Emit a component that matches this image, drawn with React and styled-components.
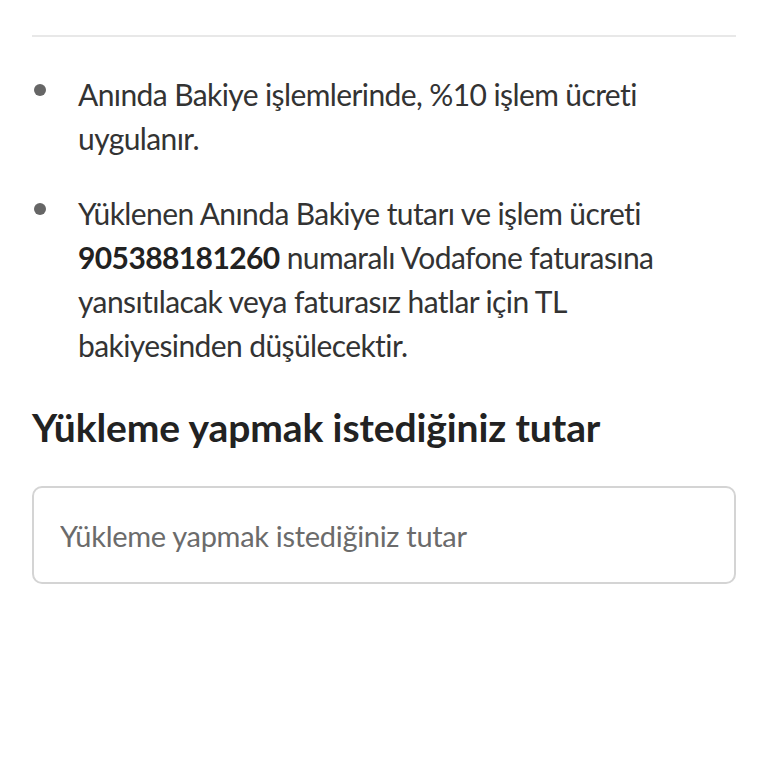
import React from 'react'
import styled, { createGlobalStyle } from 'styled-components'

const Global = createGlobalStyle`
  body {
    margin: 0;
    background: #fff;
    font-family: Lato, "Noto Sans", sans-serif;
    color: #333;
  }
`

const Page = styled.div`
  width: 768px;
  min-height: 768px;
  padding: 35px 32px 0 32px;
  box-sizing: border-box;
  display: flex;
  flex-direction: column;
`

const Divider = styled.hr`
  margin: 0;
  border: none;
  border-top: 2px solid #e8e8e8;
`

const List = styled.ul`
  list-style: none;
  margin: 35px 0 0 0;
  padding: 0;
  display: flex;
  flex-direction: column;
  gap: 31px;
`

const Item = styled.li`
  display: flex;
  align-items: flex-start;
  font-size: 30px;
  line-height: 44px;
  letter-spacing: -0.6px;
  color: #333;
`

const Dot = styled.span`
  flex: none;
  width: 12px;
  height: 12px;
  border-radius: 50%;
  background: #666;
  margin: 12px 32px 0 2px;
`

const Strong = styled.b`
  font-weight: 700;
  color: #222;
`

const Heading = styled.h2`
  margin: 38px 0 0 0;
  font-size: 39px;
  line-height: 44px;
  font-weight: 700;
  letter-spacing: -0.1px;
  color: #222;
`

const Field = styled.input`
  margin-top: 37px;
  height: 98px;
  box-sizing: border-box;
  border: 2px solid #d4d4d4;
  border-radius: 10px;
  padding: 0 26px;
  font-family: Lato, "Noto Sans", sans-serif;
  font-size: 29px;
  letter-spacing: -0.3px;
  color: #333;
  outline: none;
  &::placeholder {
    color: #6b6b6b;
  }
`

export default function App() {
  return (
    <>
      <Global />
      <Page>
        <Divider />
        <List>
          <Item>
            <Dot />
            <span>Anında Bakiye işlemlerinde, %10 işlem ücreti uygulanır.</span>
          </Item>
          <Item>
            <Dot />
            <span>
              Yüklenen Anında Bakiye tutarı ve işlem ücreti <Strong>905388181260</Strong> numaralı Vodafone faturasına yansıtılacak veya faturasız hatlar için TL bakiyesinden düşülecektir.
            </span>
          </Item>
        </List>
        <Heading>Yükleme yapmak istediğiniz tutar</Heading>
        <Field placeholder="Yükleme yapmak istediğiniz tutar" />
      </Page>
    </>
  )
}
